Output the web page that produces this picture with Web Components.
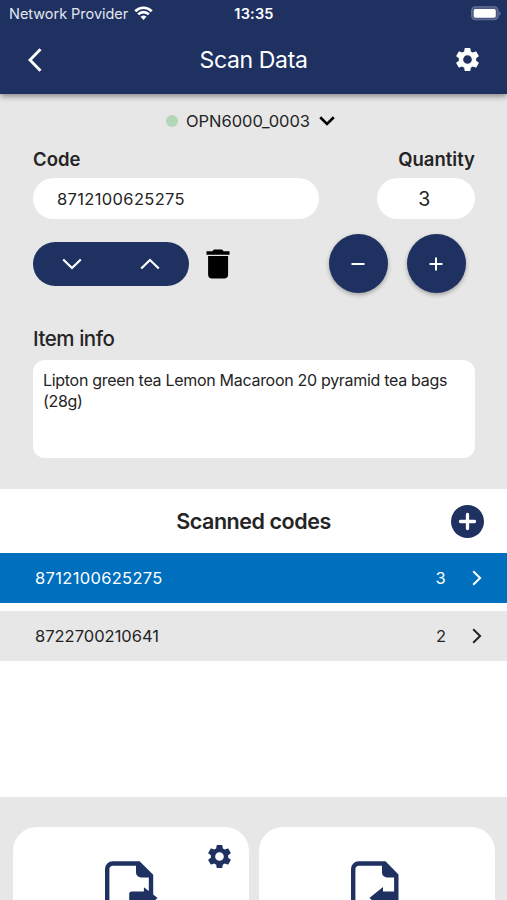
<!DOCTYPE html>
<html lang="en">
<head>
<meta charset="utf-8">
<title>Scan Data</title>
<style>
  body {
    margin: 0;
    height: 900px;
    overflow: hidden;
    font-family: Inter, 'Liberation Sans', sans-serif;
    color: #242424;
    background: #e7e7e7;
    --navy: #1f3161;
    --blue: #006fbd;
    --grey: #e7e7e7;
  }
</style>
</head>
<body>
<scan-app></scan-app>

<script>
const ICONS = {
  back: ['0 0 14 24', '<path d="M12.5 1.2 2 12l10.500 10.800" fill="none" stroke="currentColor" stroke-width="2.900"/>'],
  gear: ['0 0 24 24', '<path fill="currentColor" d="M19.140 12.940c.04-.3.06-.61.06-.94 0-.32-.02-.64-.07-.94l2.030-1.580c.18-.14.23-.41.12-.61l-1.920-3.320c-.12-.22-.37-.29-.59-.22l-2.390.96c-.5-.38-1.030-.7-1.620-.94l-.36-2.540c-.04-.24-.24-.41-.48-.41h-3.840c-.24 0-.43.17-.47.41l-.36 2.540c-.59.24-1.130.57-1.620.94l-2.390-.96c-.22-.08-.47 0-.59.22L2.740 8.870c-.12.21-.08.47.12.61l2.030 1.580c-.05.3-.09.63-.09.94s.02.64.07.94l-2.030 1.580c-.18.14-.23.41-.12.61l1.920 3.320c.12.22.37.29.59.22l2.390-.96c.5.38 1.030.7 1.620.94l.36 2.540c.05.24.24.41.48.41h3.840c.24 0 .44-.17.47-.41l.36-2.540c.59-.24 1.130-.56 1.620-.94l2.390.96c.22.08.47 0 .59-.22l1.920-3.320c.12-.22.07-.47-.12-.61zM12 15.600a3.600 3.600 0 1 1 0-7.200 3.600 3.600 0 0 1 0 7.200z"/>'],
  wifi: ['0 0 20 15', '<g fill="none" stroke="currentColor" stroke-width="2.900"><path d="M1.200 5.600a12.300 12.300 0 0 1 17.600 0"/><path d="M4.300 9a8 8 0 0 1 11.400 0"/></g><path d="m10 14.900-3.200-3.300a4.600 4.600 0 0 1 6.400 0z" fill="currentColor"/>'],
  battery: ['0 0 31 15', '<rect x=".7" y=".7" width="27.300" height="13.300" rx="3.800" fill="#4a5980" stroke="#65729a" stroke-width="1.200"/><rect x="2.800" y="2.800" width="22.800" height="9.200" rx="1.800" fill="currentColor"/><path d="M29.300 5.200c1.700.8 1.700 3.800 0 4.600z" fill="#7c87a4"/>'],
  down: ['0 0 20 12', '<path d="m1.200 1.500 8.800 8.500 8.800-8.500" fill="none" stroke="currentColor" stroke-width="2.200"/>'],
  up: ['0 0 20 12', '<path d="M1.200 10.500 10 2l8.800 8.500" fill="none" stroke="currentColor" stroke-width="2.200"/>'],
  caret: ['0 0 16 10', '<path d="m1.200 1.300 6.800 6.700 6.800-6.700" fill="none" stroke="currentColor" stroke-width="2.600"/>'],
  next: ['0 0 10 16', '<path d="m1.200 1.300 6.900 6.700-6.900 6.700" fill="none" stroke="currentColor" stroke-width="2"/>'],
  trash: ['0 0 24 30', '<path fill="currentColor" d="M.5 2.200h5.800L8 .5h8l1.700 1.700h5.800v3.600H.5zM2.100 7h20v18.600a4 4 0 0 1-4 4h-12a4 4 0 0 1-4-4z"/>'],
  minus: ['0 0 14 14', '<path d="M.5 7h13" stroke="currentColor" stroke-width="2"/>'],
  plus: ['0 0 14 14', '<path d="M.5 7h13M7 .5v13" stroke="currentColor" stroke-width="2"/>'],
  add: ['0 0 32 32', '<circle cx="16" cy="16" r="16" fill="var(--navy)"/><path d="M9.200 16h13.600M16 9.200v13.600" stroke="#fff" stroke-width="3.200" stroke-linecap="round"/>'],
  export: ['0 0 54 60', '<path d="M2.200 60V8a5.500 5.500 0 0 1 5.500-5.500h26L46 14.600V60" fill="none" stroke="currentColor" stroke-width="4.400"/><path d="M31 2v9.500a5 5 0 0 0 5 5h12L34 2zM24.200 33q0-2.600 2.600-2.600h12.100v-4.200L52.600 37 39 48v-6H24.200z" fill="currentColor"/>'],
  import: ['0 0 54 60', '<path d="M2.200 60V8a5.500 5.500 0 0 1 5.500-5.500h25.800L45.300 14.400V60" fill="none" stroke="currentColor" stroke-width="4.400"/><path d="M31 2v9.500a5 5 0 0 0 5 5h11L34 2zM18.400 37 32 26v4.600h15V42H32v6z" fill="currentColor"/>']
}

class ScanIcon extends HTMLElement {
  constructor() {
    super()
    this.attachShadow({ mode: 'open' })
  }

  connectedCallback() {
    const [box, body] = ICONS[this.getAttribute('name')]
    this.shadowRoot.innerHTML = `
      <style>
        :host { display: inline-block; flex: none; line-height: 0; }
        svg { display: block; width: 100%; height: 100%; }
      </style>
      <svg viewBox="${box}">${body}</svg>`
  }
}

// defines an element whose shadow root is cloned from the given markup
function define(name, html) {
  const template = document.createElement('template')
  template.innerHTML = html
  customElements.define(name, class extends HTMLElement {
    constructor() {
      super()
      this.attachShadow({ mode: 'open' }).appendChild(template.content.cloneNode(true))
    }
  })
}

customElements.define('scan-icon', ScanIcon)

define('status-bar', `
  <style>
    :host { display: grid; grid-template-columns: 1fr auto 1fr; align-items: center; height: 28px; padding: 0 6px 0 9px; box-sizing: border-box; color: #fff; font-size: 14.5px; }
    .left { display: flex; align-items: center; gap: 6px; margin-top: -1px; color: #e3e7f0; letter-spacing: -.03px; }
    .left scan-icon { width: 19px; height: 14px; margin-top: -1px; color: #fff; }
    .time { font-weight: 600; letter-spacing: .2px; margin: -1px 2px 0 0; }
    .battery { justify-self: end; width: 30px; height: 15px; margin-top: -1px; }
  </style>
  <div class="left"><slot name="carrier"></slot><scan-icon name="wifi"></scan-icon></div>
  <div class="time"><slot></slot></div>
  <scan-icon class="battery" name="battery"></scan-icon>
`)

define('app-header', `
  <style>
    :host { display: block; position: relative; flex: none; height: 94px; background: var(--navy); color: #fff; box-shadow: 0 2px 6px rgba(0, 0, 0, .45); }
    .bar { display: grid; grid-template-columns: 1fr auto 1fr; align-items: center; height: 64px; padding: 0 25px 0 28px; }
    .back { width: 14px; height: 24px; }
    .gear { width: 29px; height: 29px; justify-self: end; margin-top: -1px; }
    h1 { margin: 0 3px 0 0; font-size: 23px; font-weight: 400; letter-spacing: -.35px; }
  </style>
  <slot name="status"></slot>
  <div class="bar">
    <scan-icon class="back" name="back"></scan-icon>
    <h1><slot></slot></h1>
    <scan-icon class="gear" name="gear"></scan-icon>
  </div>
`)

define('device-picker', `
  <style>
    :host { display: flex; align-items: center; justify-content: center; height: 20px; padding: 17px 0 0; margin-left: -6px; font-size: 16.5px; letter-spacing: -.05px; }
    i { width: 12px; height: 12px; margin-right: 8px; border-radius: 50%; background: #b2d6b6; }
    scan-icon { width: 16px; height: 10px; margin-left: 9px; color: #000; }
  </style>
  <i></i><span><slot></slot></span><scan-icon name="caret"></scan-icon>
`)

define('text-field', `
  <style>
    :host { display: block; }
    label { display: block; height: 26px; line-height: 25px; margin-bottom: 5px; font-size: 18.5px; font-weight: 600; text-align: var(--label-align, left); }
    .box { height: 41px; line-height: 43px; padding: var(--box-padding, 0 24px); border-radius: 21px; background: #fff; font-size: var(--value-size, 16.5px); letter-spacing: .35px; text-align: var(--value-align, left); }
  </style>
  <label><slot name="label"></slot></label>
  <div class="box"><slot></slot></div>
`)

define('action-row', `
  <style>
    :host { display: flex; align-items: center; height: 59px; margin-top: 15px; color: #fff; }
    .pill { display: flex; justify-content: space-between; align-items: center; width: 98px; height: 44px; padding: 0 29px; border-radius: 22px; background: var(--navy); }
    .pill scan-icon { width: 20px; height: 12px; }
    .trash { width: 24px; height: 30px; margin-left: 17px; margin-right: auto; color: #000; }
    .buttons { display: flex; gap: 19px; margin-right: 9.5px; }
    .round { display: grid; place-items: center; width: 59px; height: 59px; border-radius: 50%; background: var(--navy); box-shadow: 0 2px 4px rgba(0, 0, 0, .3); }
    .round scan-icon { width: 14px; height: 14px; }
  </style>
  <div class="pill"><scan-icon name="down"></scan-icon><scan-icon name="up"></scan-icon></div>
  <scan-icon class="trash" name="trash"></scan-icon>
  <div class="buttons">
    <div class="round"><scan-icon name="minus"></scan-icon></div>
    <div class="round"><scan-icon name="plus"></scan-icon></div>
  </div>
`)

define('item-info', `
  <style>
    :host { display: block; margin-top: 31px; }
    h2 { margin: 0 0 8px; height: 28px; line-height: 29px; font-size: 20.5px; font-weight: 500; letter-spacing: -.45px; }
    .box { height: 98px; padding: 10px; box-sizing: border-box; border-radius: 12px; background: #fff; font-size: 16px; line-height: 21px; letter-spacing: -.3px; }
  </style>
  <h2><slot name="label"></slot></h2>
  <div class="box"><slot></slot></div>
`)

define('list-header', `
  <style>
    :host { display: grid; grid-template-columns: 1fr auto 1fr; align-items: center; height: 64px; padding: 0 23px; }
    h2 { grid-column: 2; margin: 0; font-size: 21.5px; font-weight: 600; letter-spacing: -.45px; }
    scan-icon { width: 33px; height: 33px; justify-self: end; }
  </style>
  <h2><slot></slot></h2>
  <scan-icon name="add"></scan-icon>
`)

define('code-row', `
  <style>
    :host { display: flex; align-items: center; height: 50px; padding: 0 25px 0 35px; margin-bottom: 8px; background: var(--grey); font-size: 16.5px; }
    :host([selected]) { background: var(--blue); color: #fff; letter-spacing: .33px; }
    .count { margin-left: auto; margin-right: 26px; }
    scan-icon { width: 10px; height: 16px; }
  </style>
  <span><slot></slot></span>
  <span class="count"><slot name="count"></slot></span>
  <scan-icon name="next"></scan-icon>
`)

define('file-card', `
  <style>
    :host { display: block; position: relative; height: 220px; border-radius: 24px; background: #fff; color: var(--navy); }
    ::slotted(.file) { width: 54px; height: 60px; margin: 34px 0 0 92px; }
    ::slotted(.badge) { position: absolute; top: 15px; right: 15px; width: 29px; height: 29px; }
  </style>
  <slot></slot>
`)

define('scan-app', `
  <style>
    :host { display: flex; flex-direction: column; height: 900px; overflow: hidden; }
    .form { flex: none; height: 395px; background: var(--grey); }
    .content { padding: 16px 32px 0 33px; }
    .fields { display: flex; justify-content: space-between; }
    .code { width: 286px; }
    .quantity { width: 98px; --label-align: right; --value-align: center; --value-size: 19.5px; --box-padding: 0 3px 0 0; }
    .list { flex: none; height: 308px; background: #fff; }
    .cards { display: grid; grid-template-columns: 236px 236px; gap: 10px; padding: 30px 13px 0; background: var(--grey); }
  </style>
  <app-header>
    <status-bar slot="status"><span slot="carrier">Network Provider</span>13:35</status-bar>
    Scan Data
  </app-header>
  <div class="form">
    <device-picker>OPN6000_0003</device-picker>
    <div class="content">
      <div class="fields">
        <text-field class="code"><span slot="label">Code</span>8712100625275</text-field>
        <text-field class="quantity"><span slot="label">Quantity</span>3</text-field>
      </div>
      <action-row></action-row>
      <item-info>
        <span slot="label">Item info</span>
        Lipton green tea Lemon Macaroon 20 pyramid tea bags (28g)
      </item-info>
    </div>
  </div>
  <div class="list">
    <list-header>Scanned codes</list-header>
    <code-row selected>8712100625275<span slot="count">3</span></code-row>
    <code-row>8722700210641<span slot="count">2</span></code-row>
  </div>
  <div class="cards">
    <file-card><scan-icon class="file" name="export"></scan-icon><scan-icon class="badge" name="gear"></scan-icon></file-card>
    <file-card><scan-icon class="file" name="import"></scan-icon></file-card>
  </div>
`)
</script>
</body>
</html>
